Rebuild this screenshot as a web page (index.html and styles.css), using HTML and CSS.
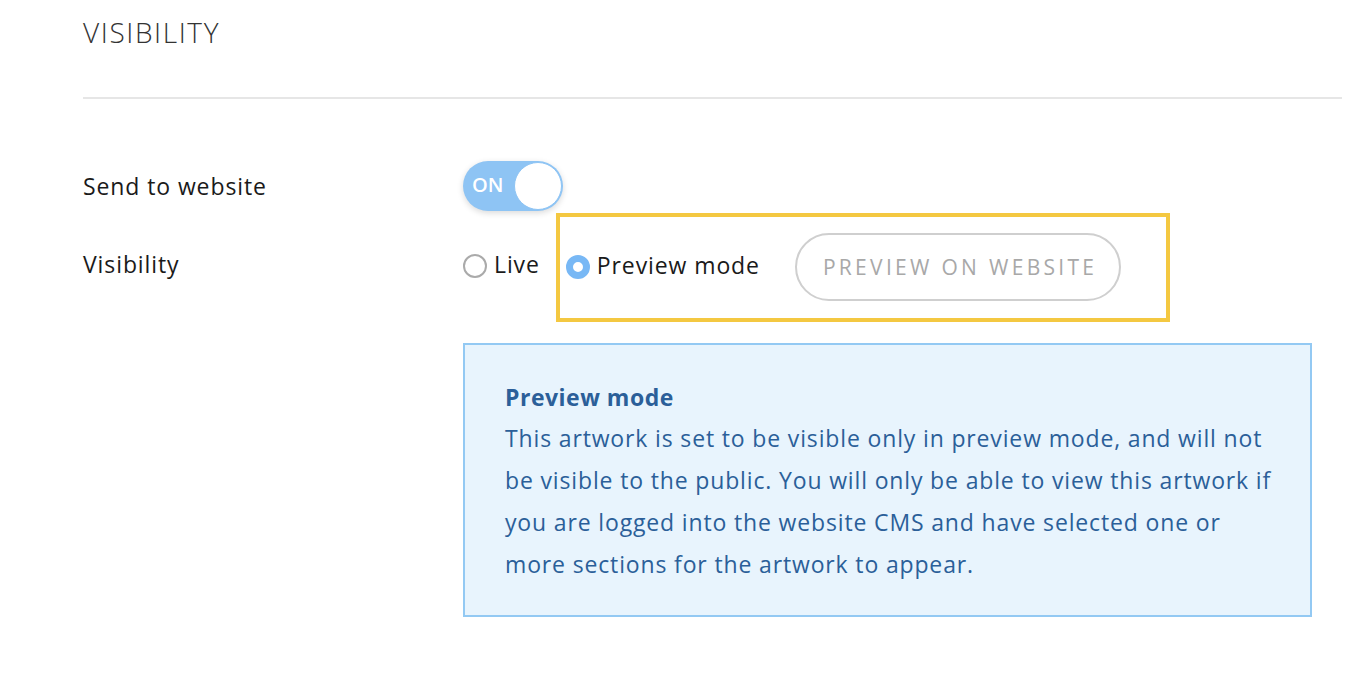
FILE: index.html
```html
<!DOCTYPE html>
<html lang="en">
<head>
    <meta charset="UTF-8">
    <title>Visibility</title>
    <link rel="stylesheet" href="styles.css">
</head>
<body>
    <div class="panel">
        <h2 class="titulo">VISIBILITY</h2>
        <hr class="linea">

        <div class="fila">
            <div class="etiqueta">Send to website</div>
            <div class="interruptor">
                <span class="on">ON</span>
                <span class="bola"></span>
            </div>
        </div>

        <div class="fila fila-vis">
            <div class="etiqueta">Visibility</div>
            <label class="opcion">
                <span class="radio"></span>Live
            </label>
            <div class="resaltado">
                <label class="opcion">
                    <span class="radio marcado"></span>Preview mode
                </label>
                <button type="button" class="boton">PREVIEW ON WEBSITE</button>
            </div>
        </div>

        <div class="aviso">
            <div class="aviso-titulo">Preview mode</div>
            <p>This artwork is set to be visible only in preview mode, and will not be visible to the public. You will only be able to view this artwork if you are logged into the website CMS and have selected one or more sections for the artwork to appear.</p>
        </div>
    </div>
</body>
</html>
```

FILE: styles.css
```css
/* Panel de visibilidad */
body {
    margin: 0;
    font-family: "Open Sans", Lato, sans-serif;
    color: #1a1a1a;
    background: #fff;
    letter-spacing: 0.9px;
}
.panel {
    padding: 0 26px 0 83px;
}
.titulo {
    margin: 0;
    padding-top: 14px;
    font-size: 28px;
    font-weight: 300;
    color: #333;
    line-height: 36px;
    letter-spacing: 1.6px;
}
.linea {
    border: none;
    border-top: 2px solid #e6e6e6;
    margin: 47px 0 0 0;
}
.fila {
    display: flex;
    align-items: center;
    margin-top: 62px;
}
.etiqueta {
    width: 380px;
    font-size: 23px;
}
.interruptor {
    position: relative;
    width: 100px;
    height: 50px;
    border-radius: 25px;
    background: #8ec4f4;
    box-shadow: 0 2px 6px rgba(0, 0, 0, 0.15);
}
.on {
    position: absolute;
    left: 9px;
    top: 10px;
    color: #fff;
    font-size: 20px;
    font-weight: 600;
    letter-spacing: 0;
}
.bola {
    position: absolute;
    right: 1px;
    top: 1px;
    width: 46px;
    height: 46px;
    border-radius: 50%;
    background: #fff;
    border: 1px solid #8ec4f4;
}
.fila-vis {
    margin-top: 2px;
}
.fila-vis .etiqueta,
.opcion {
    padding-bottom: 7px;
}
.opcion {
    display: flex;
    align-items: center;
    font-size: 23px;
    cursor: pointer;
}
.radio {
    width: 20px;
    height: 20px;
    border: 2px solid #aaa;
    border-radius: 50%;
    margin-right: 7px;
    margin-top: 3px;
}
.radio.marcado {
    border: 7px solid #78b8f5;
    width: 10px;
    height: 10px;
    background: #fff;
}
.resaltado {
    display: flex;
    align-items: center;
    margin-left: 16px;
    border: 4px solid #f4c841;
    padding: 16px 45px 17px 6px;
}
.resaltado .opcion {
    padding-bottom: 4px;
}
.boton {
    margin-left: 35px;
    height: 68px;
    padding: 0 22px 0 26px;
    border: 2px solid #cfcfcf;
    border-radius: 34px;
    background: #fff;
    color: #a8a8a8;
    font-family: inherit;
    font-size: 21px;
    letter-spacing: 3.3px;
}
.aviso {
    margin: 21px 30px 0 380px;
    background: #e8f4fd;
    border: 2px solid #93c9f3;
    padding: 34px 32px 30px 40px;
    color: #2b5f99;
    font-size: 23px;
    line-height: 42px;
}
.aviso-titulo {
    font-weight: 700;
    line-height: 36px;
    margin-bottom: 2px;
    letter-spacing: 0.5px;
}
.aviso p {
    margin: 0;
    letter-spacing: 0.85px;
}
```
